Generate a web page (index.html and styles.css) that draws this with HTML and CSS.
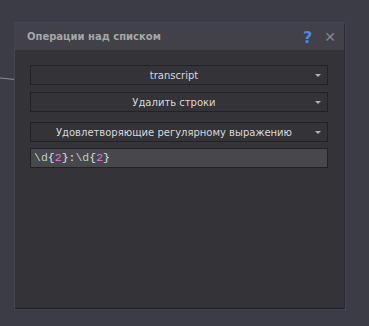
FILE: index.html
```html
<!DOCTYPE html>
<html lang="ru">
<head>
  <meta charset="UTF-8">
  <title>Операции над списком</title>
  <link rel="stylesheet" href="styles.css">
</head>
<body>
  <!-- connector line from the canvas behind the dialog -->
  <svg class="wire" width="20" height="6" viewBox="0 0 20 6">
    <line x1="0" y1="1" x2="20" y2="3" stroke="#8a8a90" stroke-width="1.2"/>
  </svg>

  <div class="dialog">
    <div class="dialog-header">
      <span class="dialog-title">Операции над списком</span>
      <span class="help">?</span>
      <span class="close">&#x2715;</span>
    </div>
    <div class="dialog-body">
      <div class="dropdown first">
        <span>transcript</span>
        <i class="arrow"></i>
      </div>
      <div class="dropdown second">
        <span>Удалить строки</span>
        <i class="arrow"></i>
      </div>
      <div class="dropdown third">
        <span>Удовлетворяющие регулярному выражению</span>
        <i class="arrow"></i>
      </div>
      <div class="regex-input"><span class="esc">\d</span><span class="br">{</span><span class="num">2</span><span class="br">}</span><span class="br">:</span><span class="esc">\d</span><span class="br">{</span><span class="num">2</span><span class="br">}</span></div>
    </div>
  </div>
</body>
</html>
```
FILE: styles.css
```css
body {
  margin: 0;
  background: #3c3c47;
  font-family: "DejaVu Sans", Verdana, sans-serif;
  font-size: 10px;
  color: #d8d8d8;
  height: 326px;
  overflow: hidden;
}
.wire {
  position: absolute;
  left: 0;
  top: 77px;
}
.dialog {
  position: relative;
  margin: 23px 0 0 15px;
  width: 330px;
  height: 286px;
  background: #333338;
  box-shadow: 0 0 0 1px #45454f;
  border-bottom: 1px solid #1f1f24;
  border-right: 1px solid #2a2a30;
  box-sizing: border-box;
  display: flex;
  flex-direction: column;
}
.dialog-header {
  height: 27px;
  background: #414147;
  display: flex;
  align-items: center;
  padding: 0 8px 0 12px;
}
.dialog-title {
  flex: 1;
  font-weight: bold;
  color: #a6a6a8;
  font-size: 10px;
}
.help {
  color: #4a86f0;
  font-weight: bold;
  font-size: 16px;
  margin-right: 12px;
  margin-top: 1px;
}
.close {
  color: #86868c;
  font-size: 14px;
}
.dialog-body {
  padding: 15px 16px 0 15px;
  display: flex;
  flex-direction: column;
}
.dropdown {
  height: 18px;
  border: 1px solid #222226;
  background: #333338;
  display: flex;
  align-items: center;
  justify-content: center;
  position: relative;
}
.dropdown span {
  margin-left: -10px;
}
.dropdown.second {
  margin-top: 7px;
}
.dropdown.third {
  margin-top: 10px;
}
.arrow {
  position: absolute;
  right: 6px;
  top: 8px;
  width: 0;
  height: 0;
  border-left: 3px solid transparent;
  border-right: 3px solid transparent;
  border-top: 3px solid #b0b0b4;
}
.regex-input {
  margin-top: 6px;
  height: 18px;
  border: 1px solid #222226;
  background: #47474c;
  font-family: "Liberation Mono", "DejaVu Sans Mono", monospace;
  font-size: 11.5px;
  line-height: 18px;
  padding-left: 3px;
}
.esc {
  color: #b8d0c0;
}
.br {
  color: #e0e0e0;
}
.num {
  color: #d67fe0;
}
```
